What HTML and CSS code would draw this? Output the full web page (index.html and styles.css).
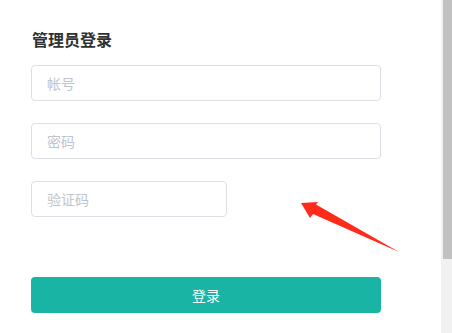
FILE: index.html
```html
<!DOCTYPE html>
<html lang="zh-CN">
<head>
<meta charset="utf-8">
<title>管理员登录</title>
<link rel="stylesheet" href="styles.css">
</head>
<body>
<div class="page">
  <div class="main">
    <form class="form">
      <h3 class="title">管理员登录</h3>
      <input class="field" type="text" placeholder="帐号">
      <input class="field" type="password" placeholder="密码">
      <input class="field field-short" type="text" placeholder="验证码">
      <button class="btn" type="button">登录</button>
    </form>
    <svg class="arrow" width="110" height="60" viewBox="295 198 110 60" xmlns="http://www.w3.org/2000/svg">
      <polygon points="301,203 318,202 316,204.5 399,252 313,214 310,218" fill="#ff2a1a"/>
    </svg>
  </div>
  <div class="scrollbar"><div class="thumb"></div></div>
</div>
</body>
</html>
```

FILE: styles.css
```css
html, body {
  margin: 0;
  padding: 0;
  background: #fff;
}
.page {
  display: flex;
  width: 452px;
  height: 333px;
  overflow: hidden;
  font-family: "Noto Sans CJK SC", "Noto Sans", sans-serif;
}
.main {
  flex: 1;
  position: relative;
  padding: 29px 0 0 31px;
}
.form {
  display: flex;
  flex-direction: column;
  width: 350px;
  margin: 0;
}
.title {
  margin: 0 0 16px 1px;
  font-size: 16px;
  line-height: 20px;
  font-weight: 700;
  color: #303133;
}
.field {
  box-sizing: border-box;
  width: 350px;
  height: 36px;
  margin: 0 0 22px 0;
  padding: 0 15px;
  border: 1px solid #dcdfe6;
  border-radius: 4px;
  font-family: inherit;
  font-size: 14px;
  color: #606266;
  outline: none;
  background: #fff;
}
.field::placeholder {
  color: #c0c4cc;
}
.field-short {
  width: 196px;
  margin-bottom: 60px;
}
.btn {
  box-sizing: border-box;
  width: 350px;
  height: 36px;
  border: none;
  border-radius: 4px;
  background: #19b4a4;
  color: #fff;
  font-family: inherit;
  font-size: 14px;
  padding: 0;
}
.arrow {
  position: absolute;
  left: 295px;
  top: 198px;
}
.scrollbar {
  width: 11px;
  flex: none;
  background: #f1f1f1;
}
.thumb {
  margin-left: 2px;
  height: 259px;
  background: #c1c1c1;
}
```
